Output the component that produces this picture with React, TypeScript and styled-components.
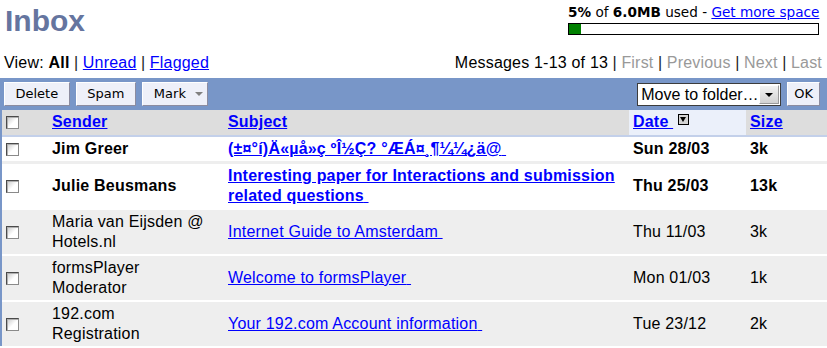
import React from "react";
import styled, { createGlobalStyle } from "styled-components";

const GlobalStyle = createGlobalStyle`
  html, body { margin: 0; padding: 0; background: #fff; }
  body {
    font-family: "Liberation Sans", Arial, sans-serif;
    font-size: 16px;
    letter-spacing: 0.2px;
    color: #000;
  }
`;

const BLUE = "#7896c8";

const Page = styled.div`
  width: 100%;
  overflow: hidden;
`;

const TopBar = styled.header`
  display: flex;
  justify-content: space-between;
  align-items: flex-start;
  height: 53px;
  padding: 0 8px 0 5px;
  box-sizing: border-box;
`;

const Title = styled.h1`
  margin: 0;
  padding-top: 4px;
  font-size: 30px;
  line-height: 34px;
  font-weight: bold;
  letter-spacing: 0;
  color: #65759f;
`;

const Quota = styled.div`
  width: 251px;
  margin-top: 5px;
`;

const QuotaText = styled.div`
  font-family: "DejaVu Sans", Verdana, sans-serif;
  font-size: 13.6px;
  letter-spacing: 0;
  line-height: 15px;
  white-space: nowrap;
  text-align: right;
  b { font-weight: bold; }
`;

const QuotaLink = styled.a`
  color: #0000ff;
  text-decoration: underline;
  cursor: pointer;
`;

const QuotaBar = styled.div`
  margin-top: 3px;
  height: 12px;
  border: 1px solid #000;
  box-sizing: border-box;
  background: #fff;
`;

const QuotaFill = styled.div`
  height: 100%;
  background: #008000;
`;

const NavRow = styled.nav`
  display: flex;
  justify-content: space-between;
  align-items: flex-start;
  padding: 0 5px 0 4px;
  height: 20px;
  line-height: 20px;
  margin-bottom: 5px;
  white-space: nowrap;
`;

const NavGroup = styled.div`
  display: flex;
`;

const Current = styled.b`
  font-weight: bold;
`;

const NavLink = styled.a<{ $disabled?: boolean }>`
  color: ${(p) => (p.$disabled ? "#999" : "#0000ff")};
  text-decoration: ${(p) => (p.$disabled ? "none" : "underline")};
  cursor: pointer;
`;

const Sep = styled.span`
  color: #222;
  margin: 0 0.28em;
`;

const MailBox = styled.section`
  width: 100%;
`;

const Toolbar = styled.div`
  display: flex;
  justify-content: space-between;
  align-items: flex-start;
  height: 32px;
  box-sizing: border-box;
  padding: 4px 7px 0 4px;
  background: ${BLUE};
`;

const ToolGroup = styled.div<{ $gap: number }>`
  display: flex;
  align-items: flex-start;
  gap: ${(p) => p.$gap}px;
`;

const ToolButton = styled.button<{ $pad?: string }>`
  height: 24px;
  box-sizing: border-box;
  padding: ${(p) => p.$pad ?? "0 10.5px"};
  margin: 0;
  font-family: "DejaVu Sans", Verdana, sans-serif;
  font-size: 13px;
  letter-spacing: 0;
  line-height: 20px;
  color: #000;
  background: #eef0f9;
  border: 1px solid;
  border-color: #ffffff #8c8ca0 #8c8ca0 #ffffff;
  display: inline-flex;
  align-items: center;
  gap: 9px;
  cursor: pointer;
`;

const DropCaret = styled.span`
  width: 0;
  height: 0;
  border-left: 4px solid transparent;
  border-right: 4px solid transparent;
  border-top: 4px solid #808080;
`;

const FolderSelect = styled.div`
  margin-top: 1px;
  width: 144px;
  height: 23px;
  box-sizing: border-box;
  border: 1px solid #3c3c3c;
  background: #fff;
  display: flex;
  align-items: center;
  justify-content: space-between;
  padding: 0 1px 0 3px;
  font-size: 16px;
  letter-spacing: 0;
  line-height: 20px;
  white-space: nowrap;
`;

const SelectArrow = styled.span`
  width: 20px;
  height: 19px;
  box-sizing: border-box;
  background: linear-gradient(#f2f2f2, #d2d2d2);
  border: 1px solid;
  border-color: #fff #9a9a9a #9a9a9a #fff;
  display: flex;
  align-items: center;
  justify-content: center;
  &::after {
    content: "";
    border-left: 4px solid transparent;
    border-right: 4px solid transparent;
    border-top: 4px solid #000;
  }
`;

const TableWrap = styled.div`
  border-left: 2px solid ${BLUE};
`;

const MailTable = styled.table`
  width: 100%;
  border-collapse: collapse;
  table-layout: fixed;
`;

const HeadRow = styled.tr`
  background: #dddddd;
  & > th {
    border-bottom: 2px solid #c3d0ea;
  }
`;

const HeadCell = styled.th<{ $active?: boolean }>`
  text-align: left;
  vertical-align: middle;
  padding: 2px 4px 3px;
  font-weight: bold;
  line-height: 20px;
  white-space: nowrap;
  background: ${(p) => (p.$active ? "#ebf0fa" : "transparent")};
`;

const HeadLink = styled.a`
  color: #0000ff;
  text-decoration: underline;
  cursor: pointer;
`;

const SortIcon = styled.span`
  display: inline-block;
  width: 11px;
  height: 11px;
  box-sizing: border-box;
  margin-left: 5px;
  border: 1px solid #000;
  background: #d4d4d4;
  vertical-align: 2px;
  position: relative;
  &::after {
    content: "";
    position: absolute;
    left: 1px;
    top: 2px;
    border-left: 3.5px solid transparent;
    border-right: 3.5px solid transparent;
    border-top: 5px solid #000;
  }
`;

const MsgRow = styled.tr<{ $unread: boolean; $sep: string }>`
  background: ${(p) => (p.$unread ? "#ffffff" : "#eeeeee")};
  font-weight: ${(p) => (p.$unread ? "bold" : "normal")};
  & > td {
    border-top: ${(p) => p.$sep};
  }
`;

const Cell = styled.td`
  vertical-align: middle;
  padding: 2px 4px;
  line-height: 20px;
`;

const SenderCell = styled(Cell)`
  padding-right: 19px;
`;

const SubjectLink = styled.a`
  color: #0000ff;
  text-decoration: underline;
  cursor: pointer;
`;

const Check = styled.span`
  display: inline-block;
  width: 13px;
  height: 13px;
  box-sizing: border-box;
  border: 1px solid;
  border-color: #4a4a4a #8a8a8a #8a8a8a #4a4a4a;
  background: linear-gradient(135deg, #c8c8c8 0%, #ffffff 55%);
  box-shadow: inset 1px 1px 0 #b0b0b0;
  vertical-align: middle;
`;

type Msg = {
  sender: string;
  subject: string;
  date: string;
  size: string;
  unread: boolean;
};

const messages: Msg[] = [
  {
    sender: "Jim Greer",
    subject: "(±¤°í)Ä«µå»ç ºÎ½Ç? °ÆÁ¤¸¶¼¼¿ä@",
    date: "Sun 28/03",
    size: "3k",
    unread: true,
  },
  {
    sender: "Julie Beusmans",
    subject: "Interesting paper for Interactions and submission related questions",
    date: "Thu 25/03",
    size: "13k",
    unread: true,
  },
  {
    sender: "Maria van Eijsden @ Hotels.nl",
    subject: "Internet Guide to Amsterdam",
    date: "Thu 11/03",
    size: "3k",
    unread: false,
  },
  {
    sender: "formsPlayer Moderator",
    subject: "Welcome to formsPlayer",
    date: "Mon 01/03",
    size: "1k",
    unread: false,
  },
  {
    sender: "192.com Registration",
    subject: "Your 192.com Account information",
    date: "Tue 23/12",
    size: "2k",
    unread: false,
  },
];

const separatorFor = (i: number) => {
  if (i === 0) return "none";
  if (i === 1) return "3px solid #eeeeee";
  return "2px solid #ffffff";
};

export default function App() {
  const usedPct = 5;
  return (
    <Page>
      <GlobalStyle />
      <TopBar>
        <Title>Inbox</Title>
        <Quota>
          <QuotaText>
            <b>5%</b> of <b>6.0MB</b> used - <QuotaLink>Get more space</QuotaLink>
          </QuotaText>
          <QuotaBar>
            <QuotaFill style={{ width: `${usedPct}%` }} />
          </QuotaBar>
        </Quota>
      </TopBar>

      <NavRow>
        <NavGroup>
          View:&nbsp;<Current>All</Current>
          <Sep>|</Sep>
          <NavLink>Unread</NavLink>
          <Sep>|</Sep>
          <NavLink>Flagged</NavLink>
        </NavGroup>
        <NavGroup>
          Messages 1-13 of 13
          <Sep>|</Sep>
          <NavLink $disabled>First</NavLink>
          <Sep>|</Sep>
          <NavLink $disabled>Previous</NavLink>
          <Sep>|</Sep>
          <NavLink $disabled>Next</NavLink>
          <Sep>|</Sep>
          <NavLink $disabled>Last</NavLink>
        </NavGroup>
      </NavRow>

      <MailBox>
        <Toolbar>
          <ToolGroup $gap={6}>
            <ToolButton>Delete</ToolButton>
            <ToolButton>Spam</ToolButton>
            <ToolButton $pad="0 4px 0 11px">
              Mark
              <DropCaret />
            </ToolButton>
          </ToolGroup>
          <ToolGroup $gap={6}>
            <FolderSelect>
              Move to folder…
              <SelectArrow />
            </FolderSelect>
            <ToolButton $pad="0 6px">OK</ToolButton>
          </ToolGroup>
        </Toolbar>

        <TableWrap>
          <MailTable>
            <colgroup>
              <col style={{ width: 46 }} />
              <col style={{ width: 176 }} />
              <col style={{ width: 405 }} />
              <col style={{ width: 117 }} />
              <col />
            </colgroup>
            <thead>
              <HeadRow>
                <HeadCell>
                  <Check />
                </HeadCell>
                <HeadCell>
                  <HeadLink>Sender</HeadLink>
                </HeadCell>
                <HeadCell>
                  <HeadLink>Subject</HeadLink>
                </HeadCell>
                <HeadCell $active>
                  <HeadLink>Date&nbsp;</HeadLink>
                  <SortIcon />
                </HeadCell>
                <HeadCell>
                  <HeadLink>Size</HeadLink>
                </HeadCell>
              </HeadRow>
            </thead>
            <tbody>
              {messages.map((m, i) => (
                <MsgRow key={i} $unread={m.unread} $sep={separatorFor(i)}>
                  <Cell>
                    <Check />
                  </Cell>
                  <SenderCell>{m.sender}</SenderCell>
                  <Cell>
                    <SubjectLink>{m.subject}&nbsp;</SubjectLink>
                  </Cell>
                  <Cell>{m.date}</Cell>
                  <Cell>{m.size}</Cell>
                </MsgRow>
              ))}
            </tbody>
          </MailTable>
        </TableWrap>
      </MailBox>
    </Page>
  );
}
